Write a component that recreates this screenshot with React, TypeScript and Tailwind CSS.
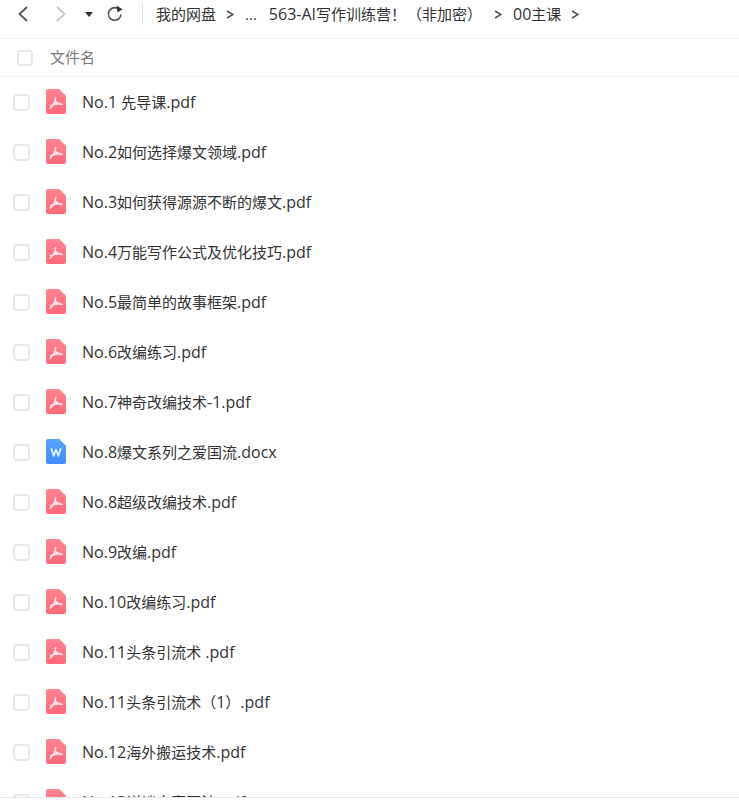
const files: [string, "pdf" | "doc"][] = [
  ["No.1 先导课.pdf", "pdf"],
  ["No.2如何选择爆文领域.pdf", "pdf"],
  ["No.3如何获得源源不断的爆文.pdf", "pdf"],
  ["No.4万能写作公式及优化技巧.pdf", "pdf"],
  ["No.5最简单的故事框架.pdf", "pdf"],
  ["No.6改编练习.pdf", "pdf"],
  ["No.7神奇改编技术-1.pdf", "pdf"],
  ["No.8爆文系列之爱国流.docx", "doc"],
  ["No.8超级改编技术.pdf", "pdf"],
  ["No.9改编.pdf", "pdf"],
  ["No.10改编练习.pdf", "pdf"],
  ["No.11头条引流术 .pdf", "pdf"],
  ["No.11头条引流术（1）.pdf", "pdf"],
  ["No.12海外搬运技术.pdf", "pdf"],
  ["No.13详谈文案写法.pdf", "pdf"],
];

// Latin runs sit a pixel larger than the CJK runs, as in the reference.
function Mixed({ text }: { text: string }) {
  const parts = text.split(/([\x20-\x7e]+)/).filter(Boolean);
  return (
    <>
      {parts.map((p, i) =>
        /^[\x20-\x7e]+$/.test(p) ? (
          <span key={i} className="text-[16px]">{p}</span>
        ) : (
          <span key={i}>{p}</span>
        )
      )}
    </>
  );
}

function FileIcon({ type }: { type: "pdf" | "doc" }) {
  const id = type === "pdf" ? "gp" : "gd";
  return (
    <svg width="20" height="25" viewBox="0 0 21 26" className="shrink-0">
      <defs>
        <linearGradient id={id} x1="0" y1="0" x2="0" y2="1">
          <stop offset="0" stopColor={type === "pdf" ? "#ff8492" : "#5aa2fb"} />
          <stop offset="1" stopColor={type === "pdf" ? "#ff6878" : "#3f8cfa"} />
        </linearGradient>
      </defs>
      <path d="M2 0H14L21 7V24a2 2 0 0 1-2 2H2a2 2 0 0 1-2-2V2a2 2 0 0 1 2-2Z" fill={`url(#${id})`} />
      {type === "pdf" ? (
        <path
          d="M10 9C10 12.5 8 17 4.5 20M10.2 13C11.5 15 13.5 16 17 16M5 17.5C8 15.8 11.5 15.2 15 15.2"
          fill="none"
          stroke="#ffe6e9"
          strokeWidth="1.7"
          strokeLinecap="round"
        />
      ) : (
        <path
          d="M5.5 9.5L8 17.5L10.5 11L13 17.5L15.5 9.5"
          fill="none"
          stroke="#d6e7ff"
          strokeWidth="2"
          strokeLinejoin="round"
        />
      )}
    </svg>
  );
}

function Sep() {
  return (
    <svg width="8" height="9" viewBox="0 0 8 9" className="block">
      <path d="M1 1L7 4.5L1 8" fill="none" stroke="#555" strokeWidth="1.6" />
    </svg>
  );
}

export default function App() {
  return (
    <div
      className="w-[739px] h-[812px] bg-white overflow-hidden text-[#333]"
      style={{ fontFamily: '"Open Sans","Noto Sans CJK SC",sans-serif' }}
    >
      <div className="h-[39px] border-b border-[#f0f0f0] flex items-center pb-[10px]">
        <svg width="14" height="18" viewBox="0 0 14 18" className="ml-[16px]">
          <path d="M11 2L3.5 9L11 16" fill="none" stroke="#555" strokeWidth="1.8" />
        </svg>
        <svg width="14" height="18" viewBox="0 0 14 18" className="ml-[24px]">
          <path d="M3 2L10.5 9L3 16" fill="none" stroke="#c8c8c8" strokeWidth="1.8" />
        </svg>
        <svg width="8" height="5" viewBox="0 0 8 5" className="ml-[17px]">
          <path d="M0 0H8L4 5Z" fill="#333" />
        </svg>
        <svg width="18" height="18" viewBox="0 0 18 18" className="ml-[13px]">
          <path d="M15 9.5A6.3 6.3 0 1 1 11.5 3.3" fill="none" stroke="#555" strokeWidth="1.7" />
          <path d="M10.5 0.5L16.5 4.2L11.5 7.5Z" fill="#333" />
        </svg>
        <div className="ml-[18px] w-px h-[22px] bg-[#e4e4e4]" />
        <div className="ml-[13px] flex items-center text-[15px] whitespace-nowrap">
          <span>我的网盘</span>
          <span className="ml-[10px]"><Sep /></span>
          <span className="ml-[11px]">...</span>
          <span className="ml-[12px]"><Mixed text="563-AI写作训练营！" /></span>
          <span className="ml-[1px]">（非加密）</span>
          <span className="ml-[12px]"><Sep /></span>
          <span className="ml-[11px]"><Mixed text="00主课" /></span>
          <span className="ml-[10px]"><Sep /></span>
        </div>
      </div>
      <div className="h-[38px] border-b border-[#f4f4f4] flex items-center">
        <div className="ml-[17px] w-4 h-4 rounded-[3px] border-2 border-[#e8e8e8]" />
        <span className="ml-[17px] text-[15px] text-[#777]">文件名</span>
      </div>
      <div className="h-[721px] overflow-hidden border-b border-[#e8e8e8]">
        {files.map(([name, type]) => (
          <div key={name} className="h-[50px] flex items-center">
            <div className="ml-[13px] w-[17px] h-[17px] rounded-[4px] border-2 border-[#e8e8e8]" />
            <div className="ml-[16px] flex pb-px"><FileIcon type={type} /></div>
            <span className="ml-[16px] text-[15px] text-[#333] whitespace-nowrap"><Mixed text={name} /></span>
          </div>
        ))}
      </div>
    </div>
  );
}
